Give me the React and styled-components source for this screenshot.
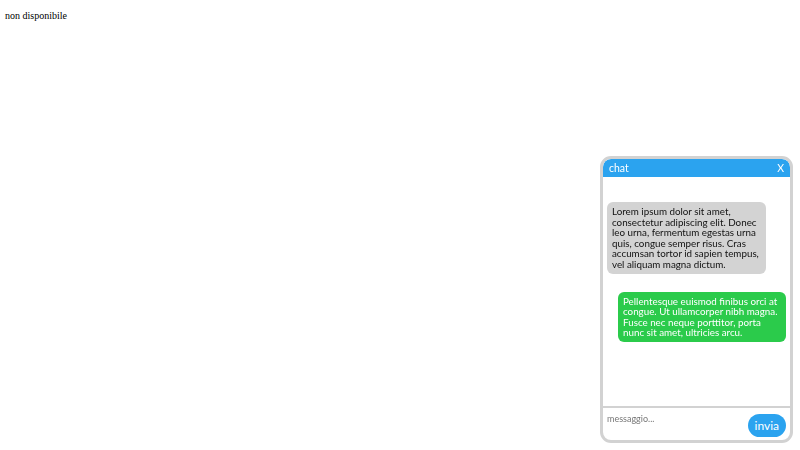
import React from "react";
import styled, { createGlobalStyle } from "styled-components";

const GlobalStyle = createGlobalStyle`
  html, body {
    margin: 0;
    padding: 0;
    background: #ffffff;
  }
  body {
    padding: 7px 5px;
    font-family: "Liberation Serif", "Times New Roman", serif;
    font-size: 10px;
    color: #000;
  }
`;

const Notice = styled.div`
  line-height: 18px;
`;

const ChatBox = styled.div`
  position: fixed;
  right: 7px;
  bottom: 7px;
  width: 187px;
  height: 281px;
  border: 3px solid #d2d2d2;
  border-radius: 11px;
  background: #fff;
  display: flex;
  flex-direction: column;
  overflow: hidden;
  font-family: Lato, "Open Sans", sans-serif;
`;

const Header = styled.div`
  height: 18px;
  flex: none;
  background: #2ba3ef;
  color: #fff;
  display: flex;
  align-items: center;
  justify-content: space-between;
  padding: 0 6px 0 6px;
  font-size: 10.5px;
  border-radius: 8px 8px 0 0;
`;

const Close = styled.span`
  font-size: 10.5px;
  cursor: pointer;
`;

const Messages = styled.div`
  flex: 1;
  display: flex;
  flex-direction: column;
  gap: 18px;
  padding: 25px 4px 0 4px;
`;

const Bubble = styled.div`
  box-sizing: border-box;
  width: ${(p) => p.$w}px;
  padding: 4px 2px 4px 5px;
  border-radius: 6px;
  font-size: 9.8px;
  line-height: 10.6px;
  background: ${(p) => (p.$mine ? "#2bcb4b" : "#d3d3d3")};
  color: ${(p) => (p.$mine ? "#fff" : "#111")};
  align-self: ${(p) => (p.$mine ? "flex-end" : "flex-start")};
`;

const Composer = styled.div`
  flex: none;
  height: 29px;
  border-top: 2px solid #d2d2d2;
  display: flex;
  align-items: flex-start;
  justify-content: space-between;
  padding: 3px 4px 0 4px;
`;

const Input = styled.input`
  border: none;
  outline: none;
  flex: 1;
  min-width: 0;
  font-family: inherit;
  font-size: 9px;
  padding: 0;
  margin-top: 2px;
  color: #333;
  background: transparent;

  &::placeholder {
    color: #777;
  }
`;

const Send = styled.button`
  margin-top: 3px;
  border: none;
  background: #2ba3ef;
  color: #fff;
  font-family: inherit;
  font-size: 12px;
  height: 23px;
  padding: 0 7px;
  border-radius: 12px;
  cursor: pointer;
`;

export default function App() {
  return (
    <>
      <GlobalStyle />
      <Notice>non disponibile</Notice>
      <ChatBox>
        <Header>
          <span>chat</span>
          <Close>X</Close>
        </Header>
        <Messages>
          <Bubble $w={159}>
            Lorem ipsum dolor sit amet, consectetur adipiscing elit. Donec leo
            urna, fermentum egestas urna quis, congue semper risus. Cras
            accumsan tortor id sapien tempus, vel aliquam magna dictum.
          </Bubble>
          <Bubble $mine $w={168}>
            Pellentesque euismod finibus orci at congue. Ut ullamcorper nibh
            magna. Fusce nec neque porttitor, porta nunc sit amet, ultricies
            arcu.
          </Bubble>
        </Messages>
        <Composer>
          <Input placeholder="messaggio..." />
          <Send>invia</Send>
        </Composer>
      </ChatBox>
    </>
  );
}
